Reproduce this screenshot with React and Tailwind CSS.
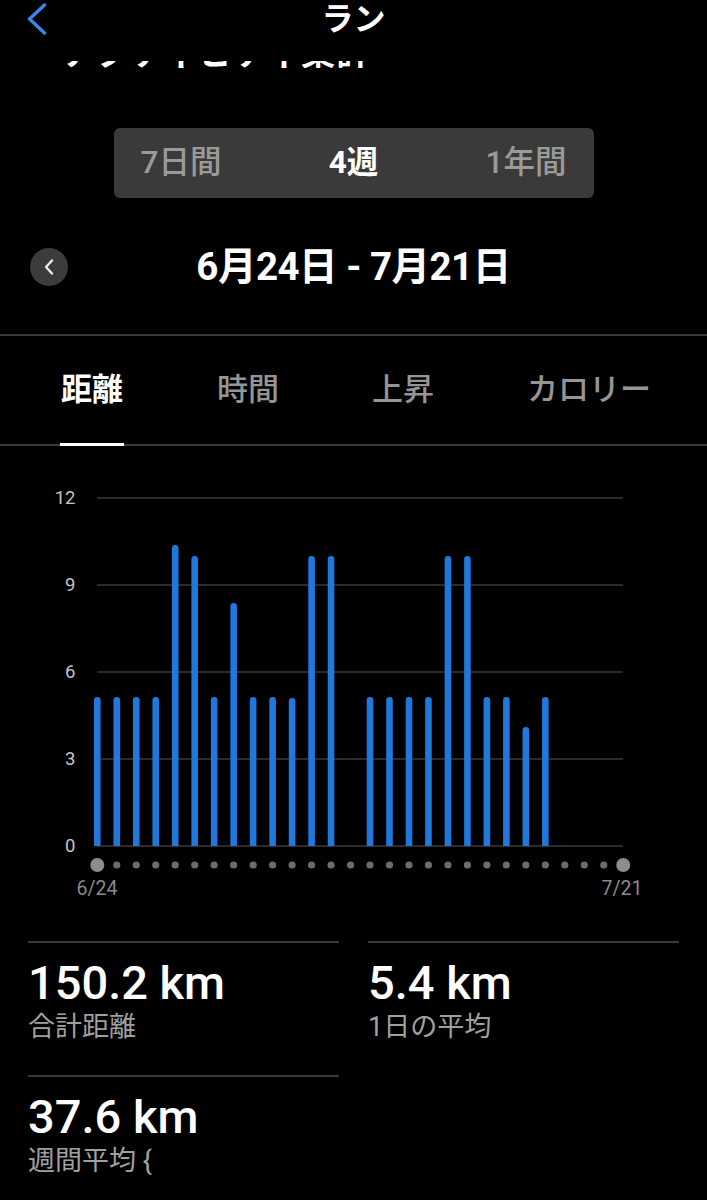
import React from "react";

const bars = [149,149,149,149,301,290,149,243,149,149,148,290,290,0,149,149,149,149,290,290,149,149,119,149,0,0,0,0];
const gridY = [
  { v: "12", y: 50 },
  { v: "9", y: 137 },
  { v: "6", y: 224 },
  { v: "3", y: 311 },
  { v: "0", y: 398 },
];

function Chart() {
  const base = 398;
  const w = 3.3;
  return (
    <svg width="707" height="462" viewBox="0 0 707 462" className="block mt-[2px]">
      {gridY.map((g) => (
        <g key={g.v}>
          <line x1="97" x2="623" y1={g.y} y2={g.y} stroke="#3a3a3a" strokeWidth="1.6" />
          <text
            x="75.5"
            y={g.y + 1}
            textAnchor="end"
            dominantBaseline="middle"
            fill="#c4c4c4"
            fontSize="18.5"
            fontFamily="Roboto, 'Liberation Sans', sans-serif"
          >
            {g.v}
          </text>
        </g>
      ))}
      {bars.map((h, i) => {
        if (!h) return null;
        const x = 97.3 + i * 19.48;
        const top = base - h;
        return (
          <path
            key={i}
            d={`M${x - w},${base} V${top + w} A${w},${w} 0 0 1 ${x + w},${top + w} V${base} Z`}
            fill="#1f78dc"
          />
        );
      })}
      {bars.map((_, i) => {
        const x = 97.3 + i * 19.48;
        const big = i === 0 || i === 27;
        return <circle key={"d" + i} cx={x} cy="417" r={big ? 7 : 3.6} fill={big ? "#8c8c8c" : "#6c6c6c"} />;
      })}
      <text x="97" y="442" textAnchor="middle" dominantBaseline="middle" fill="#8a8a8a" fontSize="19.5" fontFamily="Roboto, 'Liberation Sans', sans-serif">6/24</text>
      <text x="622" y="442" textAnchor="middle" dominantBaseline="middle" fill="#8a8a8a" fontSize="19.5" fontFamily="Roboto, 'Liberation Sans', sans-serif">7/21</text>
    </svg>
  );
}

function Stat({ value, label }) {
  return (
    <div className="border-t-2 border-[#393939] pt-[16px] pb-[34px]">
      <div className="text-[47px] leading-none font-medium text-white">{value}</div>
      <div className="mt-[8px] text-[27px] leading-none text-[#a0a0a0]">{label}</div>
    </div>
  );
}

export default function App() {
  return (
    <div className="w-[707px] h-[1200px] bg-black text-white overflow-hidden font-['Roboto','Noto_Sans_CJK_JP',sans-serif]">
      {/* header */}
      <div className="grid grid-cols-[1fr_auto_1fr] items-center h-[38px]">
        <div className="pl-[27px] flex items-center">
          <svg width="20" height="32" viewBox="0 0 20 32">
            <polyline points="17.5,2 2.5,16 17.5,30" fill="none" stroke="#3a86ef" strokeWidth="3.4" strokeLinecap="round" strokeLinejoin="round" />
          </svg>
        </div>
        <div className="text-[32px] font-bold leading-none">ラン</div>
        <div />
      </div>

      {/* clipped large title */}
      <div className="mt-[23px] h-[7px] overflow-hidden pl-[62px]">
        <div className="-mt-[25px] text-[34px] leading-[34px] font-bold whitespace-nowrap tracking-[1px]">アクティビティ集計</div>
      </div>

      {/* segmented control */}
      <div className="mt-[60px] mx-auto w-[480px] h-[70px] rounded-[6px] bg-[#3a3a3a] flex items-center justify-between px-[27px] text-[31.5px] leading-none">
        <span className="text-[#9a9a9a] font-medium">7日間</span>
        <span className="text-white font-bold">4週</span>
        <span className="text-[#9a9a9a] font-medium">1年間</span>
      </div>

      {/* date row */}
      <div className="mt-[50px] h-[38px] grid grid-cols-[1fr_auto_1fr] items-center">
        <div className="pl-[30px]">
          <div className="w-[38px] h-[38px] rounded-full bg-[#3c3c3c] flex items-center justify-center">
            <svg width="14" height="18" viewBox="0 0 14 18">
              <polyline points="10,2.5 4,9 10,15.5" fill="none" stroke="#ececec" strokeWidth="2.4" strokeLinecap="round" strokeLinejoin="round" />
            </svg>
          </div>
        </div>
        <div className="text-[38.5px] font-bold leading-none tracking-[-0.5px]">6月24日 - 7月21日</div>
        <div />
      </div>

      {/* divider */}
      <div className="mt-[48px] h-[2px] bg-[#3a3a3a]" />

      {/* tabs */}
      <div className="border-b-2 border-[#3a3a3a] flex gap-[93px] pl-[60px] text-[31px] leading-none">
        <div className="flex flex-col items-center">
          <div className="h-[107px] flex items-center font-bold text-white">距離</div>
          <div className="w-[64px] h-[3px] bg-white -mb-[2px]" />
        </div>
        <div className="h-[107px] flex items-center font-medium text-[#959595]">時間</div>
        <div className="h-[107px] flex items-center font-medium text-[#959595]">上昇</div>
        <div className="h-[107px] flex items-center font-medium text-[#959595]">カロリー</div>
      </div>

      {/* chart */}
      <Chart />

      {/* stats */}
      <div className="mt-[31px] px-[28px] grid grid-cols-2 gap-x-[29px]">
        <Stat value="150.2 km" label="合計距離" />
        <Stat value="5.4 km" label="1日の平均" />
        <Stat value="37.6 km" label="週間平均 {" />
        <div />
      </div>
    </div>
  );
}
